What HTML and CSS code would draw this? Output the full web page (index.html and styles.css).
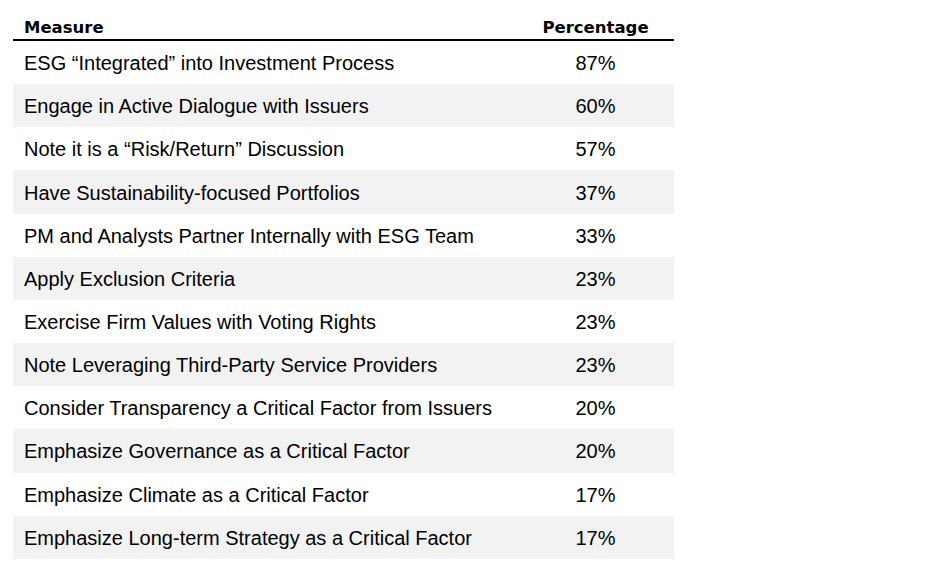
FILE: index.html
```html
<!DOCTYPE html>
<html>
<head>
<meta charset="utf-8">
<link rel="stylesheet" href="styles.css">
</head>
<body>
<div class="table">
  <div class="head">
    <div class="c1">Measure</div>
    <div class="c2">Percentage</div>
  </div>
  <div class="row"><div class="c1">ESG “Integrated” into Investment Process</div><div class="c2">87%</div></div>
  <div class="row alt"><div class="c1">Engage in Active Dialogue with Issuers</div><div class="c2">60%</div></div>
  <div class="row"><div class="c1">Note it is a “Risk/Return” Discussion</div><div class="c2">57%</div></div>
  <div class="row alt"><div class="c1">Have Sustainability-focused Portfolios</div><div class="c2">37%</div></div>
  <div class="row"><div class="c1">PM and Analysts Partner Internally with ESG Team</div><div class="c2">33%</div></div>
  <div class="row alt"><div class="c1">Apply Exclusion Criteria</div><div class="c2">23%</div></div>
  <div class="row"><div class="c1">Exercise Firm Values with Voting Rights</div><div class="c2">23%</div></div>
  <div class="row alt"><div class="c1">Note Leveraging Third-Party Service Providers</div><div class="c2">23%</div></div>
  <div class="row"><div class="c1">Consider Transparency a Critical Factor from Issuers</div><div class="c2">20%</div></div>
  <div class="row alt"><div class="c1">Emphasize Governance as a Critical Factor</div><div class="c2">20%</div></div>
  <div class="row"><div class="c1">Emphasize Climate as a Critical Factor</div><div class="c2">17%</div></div>
  <div class="row alt"><div class="c1">Emphasize Long-term Strategy as a Critical Factor</div><div class="c2">17%</div></div>
</div>
</body>
</html>
```
FILE: styles.css
```css
html, body {
  margin: 0;
  padding: 0;
  background: #ffffff;
}
body {
  padding: 14px 0 0 13px;
}
.table {
  width: 661px;
  color: #000;
}
.head {
  display: flex;
  align-items: flex-end;
  height: 25px;
  border-bottom: 2px solid #000;
  font-family: "DejaVu Sans", "Lato", sans-serif;
  font-weight: 700;
  font-size: 16.5px;
  line-height: 20px;
}
.head .c1, .head .c2 {
  padding-bottom: 1px;
}
.row {
  display: flex;
  align-items: center;
  box-sizing: border-box;
  height: 43.17px;
  padding-top: 2px;
  font-family: "Liberation Sans", Arial, sans-serif;
  font-size: 20px;
}
.row.alt {
  background: #f2f2f2;
}
.c1 {
  flex: 1;
  padding-left: 11px;
}
.c2 {
  width: 157px;
  text-align: center;
}
```
